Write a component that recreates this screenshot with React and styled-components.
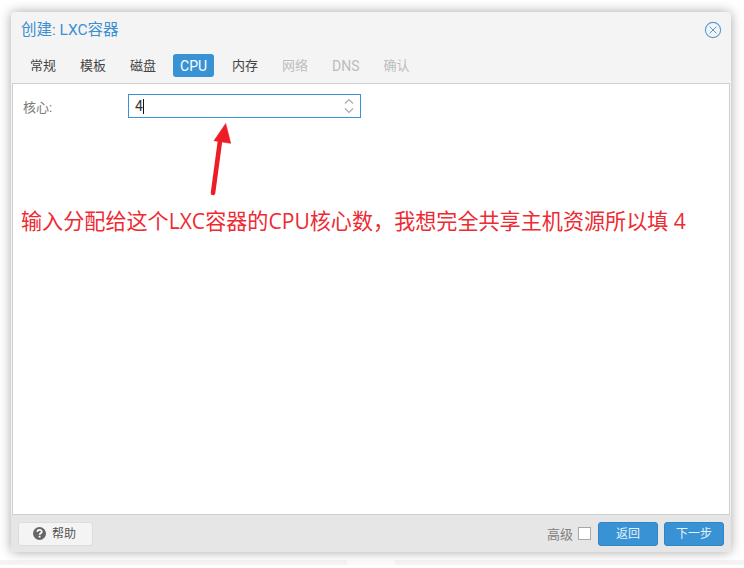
import styled, { createGlobalStyle } from 'styled-components'

const cjk = `"Roboto", "Noto Sans CJK SC", "Liberation Sans", sans-serif`

const GlobalStyle = createGlobalStyle`
    html, body {
        margin: 0;
        padding: 0;
        background: #fff;
    }
    body {
        font-family: ${cjk};
        width: 744px;
        height: 568px;
        overflow: hidden;
    }
`

const tabs = [
    { label: '常规' },
    { label: '模板' },
    { label: '磁盘' },
    { label: 'CPU', active: true, latin: true },
    { label: '内存' },
    { label: '网络', disabled: true },
    { label: 'DNS', disabled: true, latin: true },
    { label: '确认', disabled: true },
]

export default function App() {
    return (
        <Page>
            <GlobalStyle />
            <Dialog>
                <Header>
                    <Title>创建: LXC容器</Title>
                    <CloseIcon width="18" height="18" viewBox="0 0 18 18">
                        <circle cx="9" cy="9" r="7.6" fill="none" stroke="#5a9bd0" strokeWidth="1.1" />
                        <path d="M5.6 5.6 L12.4 12.4 M12.4 5.6 L5.6 12.4" stroke="#5a9bd0" strokeWidth="1" />
                    </CloseIcon>
                </Header>
                <TabBar>
                    {tabs.map((tab) => (
                        <Tab key={tab.label} $active={tab.active} $disabled={tab.disabled} $latin={tab.latin}>
                            {tab.label}
                        </Tab>
                    ))}
                </TabBar>
                <Body>
                    <FieldRow>
                        <FieldLabel>核心:</FieldLabel>
                        <SpinField>
                            <FieldValue>4</FieldValue>
                            <Caret />
                            <Spinner width="12" height="18" viewBox="0 0 12 18">
                                <path d="M2 6.5 L6 2.5 L10 6.5 M2 11.5 L6 15.5 L10 11.5" fill="none" stroke="#aaa" strokeWidth="1.2" />
                            </Spinner>
                        </SpinField>
                    </FieldRow>
                    <Arrow width="40" height="86" viewBox="0 0 40 86">
                        <path d="M10 74 L17 22" stroke="#ee1c25" strokeWidth="4.6" strokeLinecap="round" fill="none" />
                        <path d="M22.7 4.5 L11 21.7 L27.7 24.3 Z" fill="#ee1c25" stroke="#ee1c25" strokeWidth="0.6" />
                    </Arrow>
                    <Note>输入分配给这个LXC容器的CPU核心数，我想完全共享主机资源所以填 4</Note>
                </Body>
                <Footer>
                    <HelpButton>
                        <HelpIcon width="15" height="15" viewBox="0 0 15 15">
                            <circle cx="7.5" cy="7.5" r="6.5" fill="#666" />
                            <path d="M5.3 5.9 C5.4 3.3 9.8 3.3 9.8 5.7 C9.8 7.2 7.6 7.2 7.6 8.8" fill="none" stroke="#fff" strokeWidth="1.7" />
                            <rect x="6.7" y="9.8" width="1.8" height="1.7" fill="#fff" />
                        </HelpIcon>
                        <FooterText>帮助</FooterText>
                    </HelpButton>
                    <FooterSpacer />
                    <AdvancedLabel>高级</AdvancedLabel>
                    <Checkbox />
                    <PrimaryButton><FooterText>返回</FooterText></PrimaryButton>
                    <PrimaryButton><FooterText>下一步</FooterText></PrimaryButton>
                </Footer>
            </Dialog>
            <BackdropStrip>
                <StripPart $width="347px" />
                <StripGap />
                <StripPart />
            </BackdropStrip>
        </Page>
    )
}

const Page = styled.div`
    width: 744px;
    height: 568px;
    padding: 12px 13px 0 11px;
    box-sizing: border-box;
    background: #fff;
    overflow: hidden;
`

const Dialog = styled.div`
    position: relative;
    z-index: 1;
    display: flex;
    flex-direction: column;
    width: 720px;
    height: 540px;
    background: #f4f4f4;
    border-radius: 4px;
    box-shadow: 0 0 12px rgba(0, 0, 0, 0.35);
    overflow: hidden;
`

const Header = styled.div`
    display: flex;
    align-items: center;
    justify-content: space-between;
    height: 37px;
    padding: 0 9px 1px 10px;
    box-sizing: border-box;
    flex-shrink: 0;
`

const Title = styled.div`
    font-size: 15.5px;
    line-height: 20px;
    color: #3d8fd1;
`

const CloseIcon = styled.svg`
    display: block;
`

const TabBar = styled.div`
    display: flex;
    align-items: center;
    height: 34px;
    padding: 0 0 2px 10px;
    box-sizing: border-box;
    gap: 6px;
    flex-shrink: 0;
`

const Tab = styled.div`
    display: flex;
    align-items: center;
    justify-content: center;
    height: 23px;
    box-sizing: border-box;
    padding: ${(props) => props.$latin ? '1px' : '0'} ${(props) => props.$active ? '7px' : '9px'} ${(props) => props.$latin ? '0' : '2px'};
    margin: 0 ${(props) => props.$active ? '3px 0 2px' : '0'};
    border-radius: 3px;
    font-size: ${(props) => props.$latin ? '14px' : '13px'};
    background: ${(props) => props.$active ? '#3892d4' : 'transparent'};
    color: ${(props) => props.$active ? '#fff' : props.$disabled ? '#bdbdbd' : '#444'};
`

const Body = styled.div`
    position: relative;
    flex: 1;
    margin: 0 1px;
    padding: 10px;
    background: #fff;
    border: 1px solid #cfcfcf;
    box-sizing: border-box;
`

const FieldRow = styled.div`
    display: flex;
    align-items: center;
    height: 24px;
`

const FieldLabel = styled.div`
    width: 105px;
    font-size: 13px;
    color: #7a7a7a;
`

const SpinField = styled.div`
    display: flex;
    align-items: center;
    width: 233px;
    height: 24px;
    padding: 0 5px 0 6px;
    box-sizing: border-box;
    border: 1px solid #3892d4;
`

const FieldValue = styled.span`
    font-size: 14px;
    color: #333;
`

const Caret = styled.span`
    width: 1px;
    height: 15px;
    background: #111;
`

const Spinner = styled.svg`
    margin-left: auto;
`

const Arrow = styled.svg`
    position: absolute;
    left: 190px;
    top: 35px;
`

const Note = styled.div`
    position: absolute;
    left: 8px;
    top: 123px;
    white-space: nowrap;
    font-family: "Open Sans", "Noto Sans CJK SC", sans-serif;
    font-size: 21.1px;
    line-height: 28px;
    color: #ee2a33;
`

const Footer = styled.div`
    display: flex;
    align-items: center;
    height: 37px;
    padding: 0 7px;
    box-sizing: border-box;
    background: #e6e6e6;
    flex-shrink: 0;
`

const FooterText = styled.span`
    margin-top: -2px;
`

const HelpButton = styled.div`
    display: flex;
    align-items: center;
    gap: 5px;
    width: 75px;
    height: 24px;
    padding-left: 13px;
    box-sizing: border-box;
    border: 1px solid #dcdcdc;
    border-radius: 3px;
    background: #f4f4f4;
    font-size: 12px;
    color: #555;
`

const HelpIcon = styled.svg`
    display: block;
`

const FooterSpacer = styled.div`
    flex: 1;
`

const AdvancedLabel = styled.span`
    font-size: 13px;
    color: #808080;
    margin: -1px 5px 0 0;
`

const Checkbox = styled.span`
    width: 13px;
    height: 13px;
    box-sizing: border-box;
    border: 1px solid #a8a8a8;
    background: #fff;
    margin-right: 1px;
`

const PrimaryButton = styled.div`
    display: flex;
    align-items: center;
    justify-content: center;
    width: 60px;
    height: 24px;
    margin-left: 6px;
    box-sizing: border-box;
    border: 1px solid #2f85c9;
    border-radius: 3px;
    background: #3892d4;
    font-size: 12px;
    color: #e6f2fb;
`

const BackdropStrip = styled.div`
    display: flex;
    width: 744px;
    height: 5px;
    margin: 8px 0 0 -11px;
`

const StripPart = styled.div`
    flex: ${(props) => props.$width ? `0 0 ${props.$width}` : '1'};
    background: #f4f4f4;
`

const StripGap = styled.div`
    flex: 0 0 48px;
    background: #fbfbfb;
`
